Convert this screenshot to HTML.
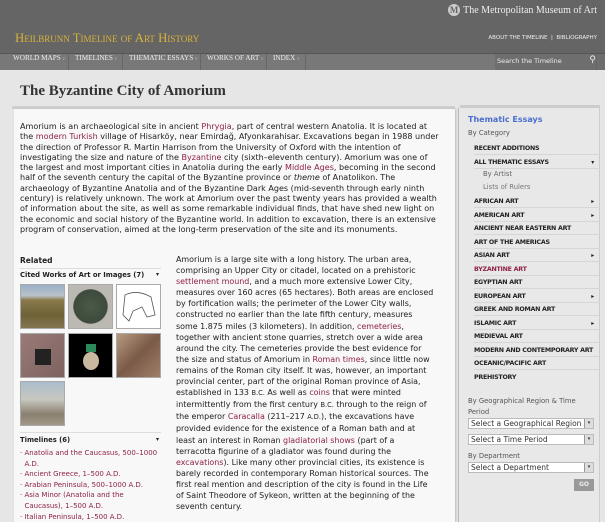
<!DOCTYPE html>
<html><head><meta charset="utf-8"><style>
*{margin:0;padding:0;box-sizing:border-box}
html{width:605px;height:522px;overflow:hidden}
body{width:605px;height:522px;overflow:hidden;background:#e6e6e6;font-family:"DejaVu Sans",sans-serif;color:#333;position:relative}
.hdr{position:absolute;left:0;top:0;width:605px;height:53px;background:#656565}
.met{position:absolute;right:8px;top:4px;color:#eee;font:10px "Liberation Serif",serif}
.met span.m{display:inline-block;width:12px;height:12px;border-radius:50%;background:#ccc;color:#666;font-size:9px;text-align:center;line-height:12px;margin-right:3px;font-weight:bold}
.logo{position:absolute;left:15px;top:31px;color:#d9b23a;font:12.8px "Liberation Serif",serif;font-variant:small-caps;white-space:nowrap}
.about{position:absolute;right:8px;top:35px;color:#eee;font-size:5.5px;white-space:nowrap}
.nav{position:absolute;left:0;top:53px;width:605px;height:17px;background:#787878;border-top:1px solid #555}
.nav span{position:absolute;top:0;height:16px;line-height:15px;color:#eee;font:7.2px "Liberation Serif",serif;padding-left:13px;border-right:1px solid #666;white-space:nowrap}
.nav span i{font-style:normal;font-size:5px;color:#bbb}
.nav .s{position:absolute;right:0;top:0;width:110px;height:16px;background:#6e6e6e;color:#eee;font:6.5px "DejaVu Sans",sans-serif;line-height:15px;padding-left:2px;white-space:nowrap}
h1{position:absolute;left:20px;top:83px;font:bold 15px "Liberation Serif",serif;color:#333;white-space:nowrap}
.bar{position:absolute;left:12px;top:106px;width:443px;height:3px;background:#d0d0d0}
.panel{position:absolute;left:14px;top:109px;width:441px;height:413px;background:#f8f8f8;box-shadow:1px 0 2px #bbb}
.t{position:absolute;white-space:nowrap;font-size:8.05px;color:#222}
.t a{color:#8e2147;text-decoration:none}
.p1{left:20px;top:122px;line-height:10.3px}
.p2{left:176px;top:254px;line-height:11.1px;font-size:7.95px}
.rel{position:absolute;left:20px;top:256px;font:bold 7.5px "DejaVu Sans";color:#222}
.hl{position:absolute;left:20px;height:1px;width:141px;background:#ddd}
.sub{position:absolute;left:20px;width:141px;font:bold 6.8px "DejaVu Sans";color:#222}
.sub b{position:absolute;right:2px;font-size:6px}
.th{position:absolute;width:45px;height:45px;border:1px solid #aaa}
.tl{position:absolute;left:20px;top:448px;font-size:7px;color:#8e2147;line-height:10.6px;white-space:nowrap}
.side{position:absolute;left:458px;top:108px;width:142px;height:414px;background:#e8e8e8;border-left:1px solid #bbb;border-right:1px solid #ccc}
.sbar{position:absolute;left:460px;top:105px;width:140px;height:3px;background:#ccc}
.st{position:absolute;left:468px;top:115px;font:bold 8px "DejaVu Sans";color:#4a6ecf}
.sc{position:absolute;left:468px;font-size:6.8px;color:#555}
.mi{position:absolute;left:474px;width:126px;height:13.4px;border-bottom:1px solid #d6d6d6;font:bold 6.3px "DejaVu Sans";letter-spacing:-0.25px;color:#222;line-height:13px;white-space:nowrap}
.mi b{position:absolute;right:6px;font-size:6px}
.sel{position:absolute;left:468px;width:126px;height:11px;background:#fff;border:1px solid #bbb;font-size:7.5px;color:#333;line-height:10px;padding-left:2px}
.sel i{position:absolute;right:0;top:0;width:9px;height:9px;background:#ddd;border-left:1px solid #999;font-style:normal;font-size:5px;text-align:center;line-height:9px}
.go{position:absolute;left:574px;top:479px;width:20px;height:12px;background:#999;color:#eee;font:bold 6px "DejaVu Sans";text-align:center;line-height:12px}
</style></head><body>
<div class="hdr">
<div class="met"><span class="m">M</span>The Metropolitan Museum of Art</div>
<div class="logo">Heilbrunn Timeline of Art History</div>
<div class="about">ABOUT THE TIMELINE &nbsp;|&nbsp; BIBLIOGRAPHY</div>
</div>
<div class="nav">
<span style="left:0;width:69px">WORLD MAPS <i>v</i></span>
<span style="left:69px;width:54px;padding-left:6px">TIMELINES <i>v</i></span>
<span style="left:123px;width:78px;padding-left:6px">THEMATIC ESSAYS <i>v</i></span>
<span style="left:201px;width:66px;padding-left:6px">WORKS OF ART <i>v</i></span>
<span style="left:267px;width:39px;padding-left:6px">INDEX <i>v</i></span>
<div class="s">Search the Timeline<span style="position:absolute;right:8px;top:0;font-size:9px">⚲</span></div>
</div>
<h1>The Byzantine City of Amorium</h1>
<div class="bar"></div>
<div class="panel"></div>
<div class="t p1">Amorium is an archaeological site in ancient <a>Phrygia</a>, part of central western Anatolia. It is located at<br>the <a>modern Turkish</a> village of Hisarköy, near Emirdağ, Afyonkarahisar. Excavations began in 1988 under<br>the direction of Professor R. Martin Harrison from the University of Oxford with the intention of<br>investigating the size and nature of the <a>Byzantine</a> city (sixth–eleventh century). Amorium was one of<br>the largest and most important cities in Anatolia during the early <a>Middle Ages</a>, becoming in the second<br>half of the seventh century the capital of the Byzantine province or <i>theme</i> of Anatolikon. The<br>archaeology of Byzantine Anatolia and of the Byzantine Dark Ages (mid-seventh through early ninth<br>century) is relatively unknown. The work at Amorium over the past twenty years has provided a wealth<br>of information about the site, as well as some remarkable individual finds, that have shed new light on<br>the economic and social history of the Byzantine world. In addition to excavation, there is an extensive<br>program of conservation, aimed at the long-term preservation of the site and its monuments.</div>
<div class="t p2">Amorium is a large site with a long history. The urban area,<br>comprising an Upper City or citadel, located on a prehistoric<br><a>settlement mound</a>, and a much more extensive Lower City,<br>measures over 160 acres (65 hectares). Both areas are enclosed<br>by fortification walls; the perimeter of the Lower City walls,<br>constructed no earlier than the late fifth century, measures<br>some 1.875 miles (3 kilometers). In addition, <a>cemeteries</a>,<br>together with ancient stone quarries, stretch over a wide area<br>around the city. The cemeteries provide the best evidence for<br>the size and status of Amorium in <a>Roman times</a>, since little now<br>remains of the Roman city itself. It was, however, an important<br>provincial center, part of the original Roman province of Asia,<br>established in 133 <small>B.C.</small> As well as <a>coins</a> that were minted<br>intermittently from the first century <small>B.C.</small> through to the reign of<br>the emperor <a>Caracalla</a> (211–217 <small>A.D.</small>), the excavations have<br>provided evidence for the existence of a Roman bath and at<br>least an interest in Roman <a>gladiatorial shows</a> (part of a<br>terracotta figurine of a gladiator was found during the<br><a>excavations</a>). Like many other provincial cities, its existence is<br>barely recorded in contemporary Roman historical sources. The<br>first real mention and description of the city is found in the Life<br>of Saint Theodore of Sykeon, written at the beginning of the<br>seventh century.</div>
<div class="rel">Related</div>
<div class="hl" style="top:268px"></div>
<div class="sub" style="top:271px">Cited Works of Art or Images (7)<b>▾</b></div>
<div class="th" style="left:20px;top:284px;background:linear-gradient(#9bb0c8 0,#b9c2c8 25%,#8a7a4c 35%,#6e6238 70%,#857550)"></div>
<div class="th" style="left:68px;top:284px;background:radial-gradient(circle,#4a5a48 0,#3e4a3c 55%,#bcb8b2 58%)"></div>
<div class="th" style="left:116px;top:284px;background:#fff"><svg width="43" height="43"><path d="M8 10 Q20 4 34 12 L38 30 L30 32 L25 22 L16 26 L12 36 L6 30 Z" fill="none" stroke="#555" stroke-width="0.8"/></svg></div>
<div class="th" style="left:20px;top:333px;background:linear-gradient(135deg,#9a7a78,#7d6360);"><div style="position:absolute;left:14px;top:15px;width:16px;height:16px;background:#222"></div></div>
<div class="th" style="left:68px;top:333px;background:#000"><div style="position:absolute;left:17px;top:10px;width:10px;height:8px;background:#2c8a5a"></div><div style="position:absolute;left:14px;top:18px;width:16px;height:18px;border-radius:50%;background:#c9b9a0"></div></div>
<div class="th" style="left:116px;top:333px;background:linear-gradient(135deg,#b89a80,#7a5a48,#a07e68)"></div>
<div class="th" style="left:20px;top:381px;background:linear-gradient(#a9bccc 0,#c8c8c0 40%,#8a8070 75%,#a09888)"></div>
<div class="hl" style="top:432px"></div>
<div class="sub" style="top:436px">Timelines (6)<b>▾</b></div>
<div class="tl">· Anatolia and the Caucasus, 500–1000<br>&nbsp; A.D.<br>· Ancient Greece, 1–500 A.D.<br>· Arabian Peninsula, 500–1000 A.D.<br>· Asia Minor (Anatolia and the<br>&nbsp; Caucasus), 1–500 A.D.<br>· Italian Peninsula, 1–500 A.D.<br>· Italian Peninsula, 500–1000 A.D.</div>
<div class="side"></div>
<div class="sbar"></div>
<div class="st">Thematic Essays</div>
<div class="sc" style="top:129px">By Category</div>
<div class="mi" style="top:142px">RECENT ADDITIONS</div>
<div class="mi" style="top:156px">ALL THEMATIC ESSAYS<b>▾</b></div>
<div class="sc" style="top:170px;left:483px;color:#666">By Artist</div>
<div class="sc" style="top:183px;left:483px;color:#777">Lists of Rulers</div>
<div class="mi" style="top:195px">AFRICAN ART<b>▸</b></div>
<div class="mi" style="top:208.5px">AMERICAN ART<b>▸</b></div>
<div class="mi" style="top:222px">ANCIENT NEAR EASTERN ART</div>
<div class="mi" style="top:235.5px">ART OF THE AMERICAS</div>
<div class="mi" style="top:249px">ASIAN ART<b>▸</b></div>
<div class="mi" style="top:262.5px;color:#8e2147">BYZANTINE ART</div>
<div class="mi" style="top:276px">EGYPTIAN ART</div>
<div class="mi" style="top:289.5px">EUROPEAN ART<b>▸</b></div>
<div class="mi" style="top:303px">GREEK AND ROMAN ART</div>
<div class="mi" style="top:316.5px">ISLAMIC ART<b>▸</b></div>
<div class="mi" style="top:330px">MEDIEVAL ART</div>
<div class="mi" style="top:343.5px">MODERN AND CONTEMPORARY ART</div>
<div class="mi" style="top:357px">OCEANIC/PACIFIC ART</div>
<div class="mi" style="top:370.5px;border:none">PREHISTORY</div>
<div class="sc" style="top:396px;line-height:10.5px">By Geographical Region &amp; Time<br>Period</div>
<div class="sel" style="top:418px">Select a Geographical Region<i>▾</i></div>
<div class="sel" style="top:434px">Select a Time Period<i>▾</i></div>
<div class="sc" style="top:452px">By Department</div>
<div class="sel" style="top:462px">Select a Department<i>▾</i></div>
<div class="go">GO</div>
</body></html>
